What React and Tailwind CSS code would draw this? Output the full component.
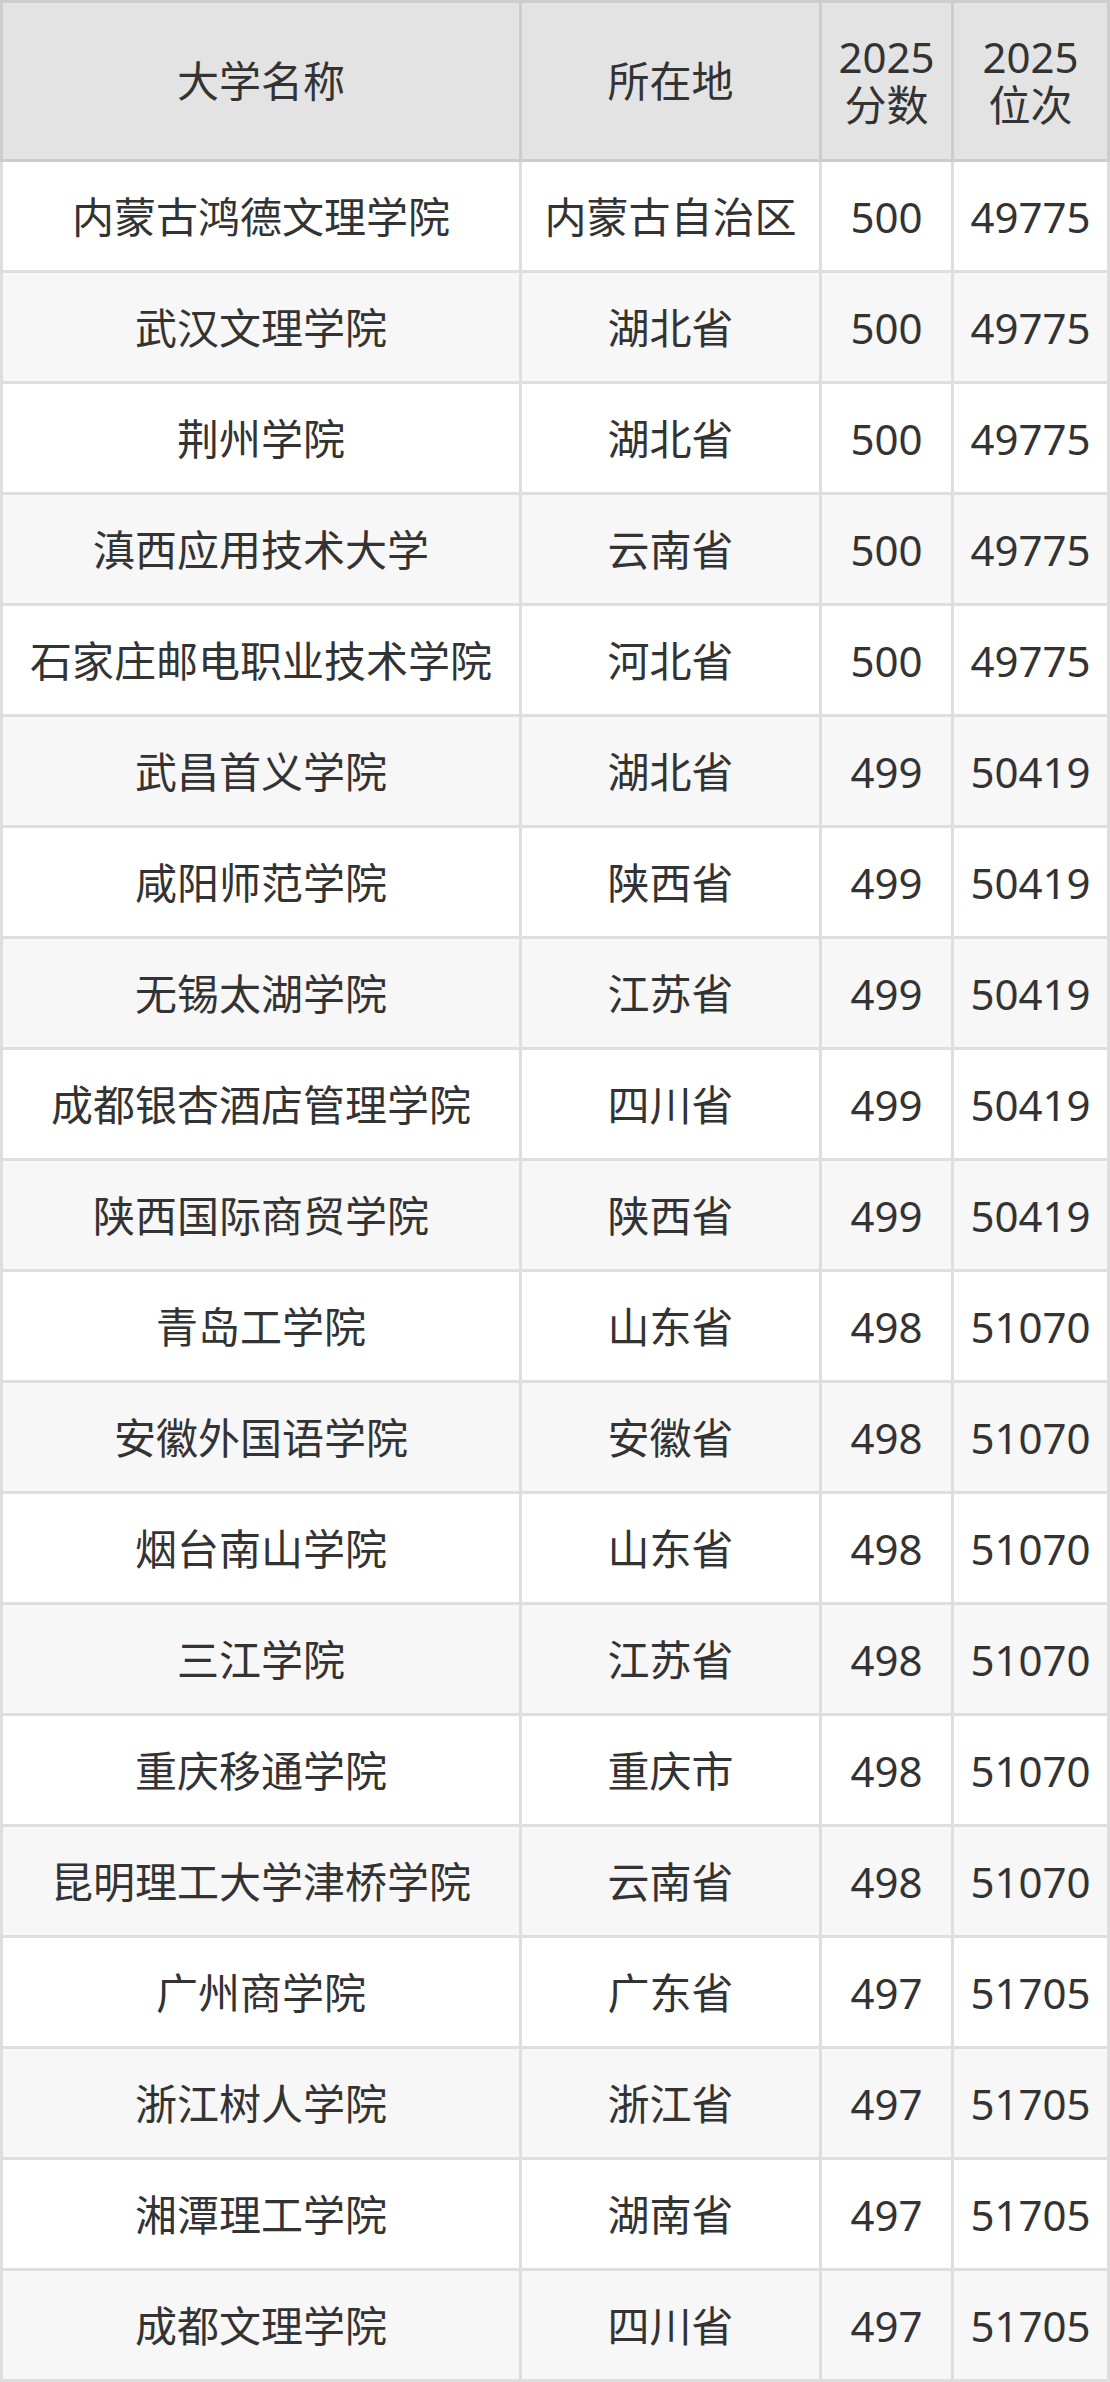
import React from 'react'

const rows = [
 ['内蒙古鸿德文理学院', '内蒙古自治区', '500', '49775'],
 ['武汉文理学院', '湖北省', '500', '49775'],
 ['荆州学院', '湖北省', '500', '49775'],
 ['滇西应用技术大学', '云南省', '500', '49775'],
 ['石家庄邮电职业技术学院', '河北省', '500', '49775'],
 ['武昌首义学院', '湖北省', '499', '50419'],
 ['咸阳师范学院', '陕西省', '499', '50419'],
 ['无锡太湖学院', '江苏省', '499', '50419'],
 ['成都银杏酒店管理学院', '四川省', '499', '50419'],
 ['陕西国际商贸学院', '陕西省', '499', '50419'],
 ['青岛工学院', '山东省', '498', '51070'],
 ['安徽外国语学院', '安徽省', '498', '51070'],
 ['烟台南山学院', '山东省', '498', '51070'],
 ['三江学院', '江苏省', '498', '51070'],
 ['重庆移通学院', '重庆市', '498', '51070'],
 ['昆明理工大学津桥学院', '云南省', '498', '51070'],
 ['广州商学院', '广东省', '497', '51705'],
 ['浙江树人学院', '浙江省', '497', '51705'],
 ['湘潭理工学院', '湖南省', '497', '51705'],
 ['成都文理学院', '四川省', '497', '51705'],
]

const head = 'flex items-center justify-center text-center bg-[#e3e3e3] border-t-[3px] border-b-[3px] border-r-[3px] border-[#cdcdcd] h-[162px] leading-[48px]'

export default function App() {
 return (
 <div className="w-[1110px] text-[42px] text-[#333] font-['Noto_Sans','Noto_Sans_CJK_SC',sans-serif]">
 <div className="grid grid-cols-[522px_300px_132px_156px]">
 <div className={head + ' border-l-[3px]'}>大学名称</div>
 <div className={head}>所在地</div>
 <div className={head}>2025<br />分数</div>
 <div className={head}>2025<br />位次</div>

 {rows.map((r, i) => {
 const bg = i % 2 === 1 ? 'bg-[#f7f7f7]' : 'bg-white'
 const cell = `flex items-center justify-center text-center h-[111px] border-b-[3px] border-r-[3px] border-[#dedede] whitespace-nowrap ${bg}`
 return (
 <React.Fragment key={i}>
 <div className={cell + ' border-l-[3px]'}>{r[0]}</div>
 <div className={cell}>{r[1]}</div>
 <div className={cell}>{r[2]}</div>
 <div className={cell}>{r[3]}</div>
 </React.Fragment>
 )
 })}
 </div>
 </div>
 )
}
